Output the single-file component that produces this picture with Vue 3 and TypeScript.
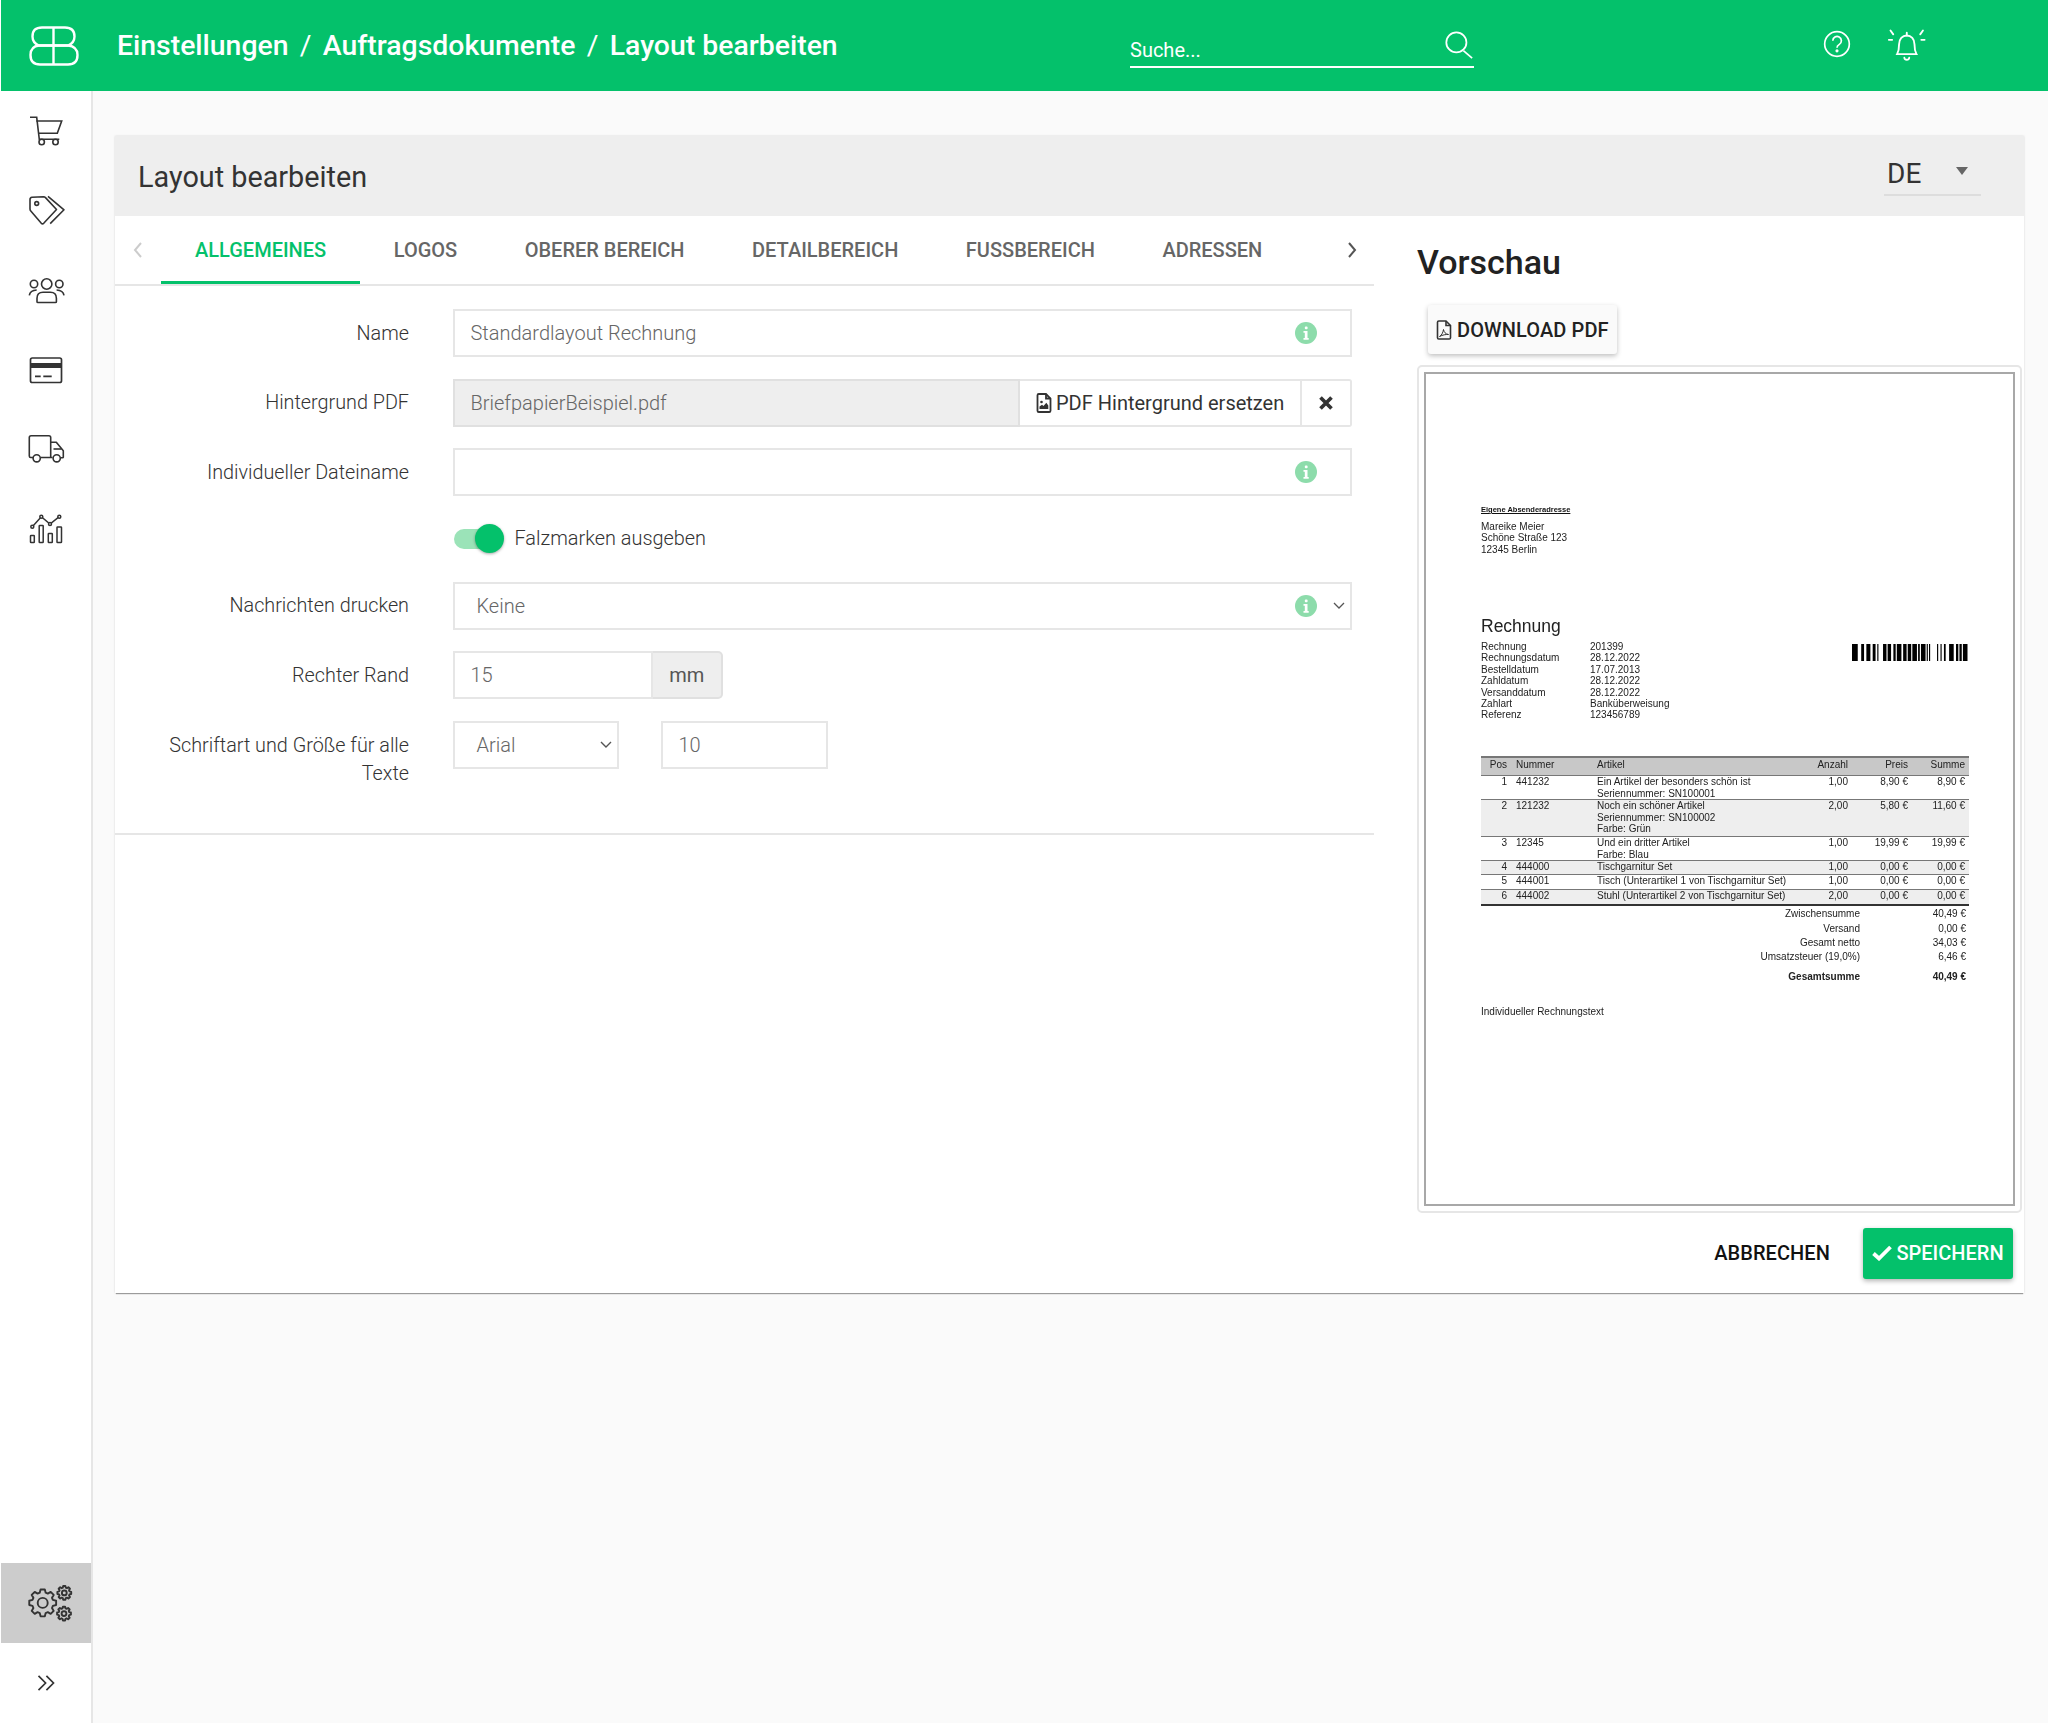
<script setup lang="ts">
function gear(cx: number, cy: number, ro: number, ri: number, n: number): string {
  const pts: string[] = []
  const step = (Math.PI * 2) / n
  for (let i = 0; i < n; i++) {
    const a = i * step
    const seq: [number, number][] = [
      [ri, a - step * 0.36],
      [ro, a - step * 0.2],
      [ro, a + step * 0.2],
      [ri, a + step * 0.36],
    ]
    for (const [r, t] of seq) {
      pts.push(`${(cx + r * Math.cos(t)).toFixed(2)} ${(cy + r * Math.sin(t)).toFixed(2)}`)
    }
  }
  return 'M' + pts.join('L') + 'Z'
}

const gears = [
  { d: gear(41.7, 39.9, 13.6, 10.6, 8), cx: 41.7, cy: 39.9, r: 5 },
  { d: gear(63.3, 29.9, 7, 5.4, 8), cx: 63.3, cy: 29.9, r: 2.4 },
  { d: gear(63, 50.6, 7, 5.4, 8), cx: 63, cy: 50.6, r: 2.4 },
]

const tabs = ['ALLGEMEINES', 'LOGOS', 'OBERER BEREICH', 'DETAILBEREICH', 'FUSSBEREICH', 'ADRESSEN']

const barData = [5,3,2.5,2,3.5,2,2.5,1.5,1,4,3,1,3,2,2,1,4,1.5,3,1,3,1,4,1,1.5,1,4,1,1,1,1,6,1,2,1,2,1.5,3,4,2,2,1,2,1,4,0]
const bars: { x: number; w: number }[] = []
let bx = 0
for (let i = 0; i < barData.length; i += 2) {
  bars.push({ x: bx, w: barData[i] })
  bx += barData[i] + barData[i + 1]
}
const barTotal = bx

const meta = [
  ['Rechnung', '201399'],
  ['Rechnungsdatum', '28.12.2022'],
  ['Bestelldatum', '17.07.2013'],
  ['Zahldatum', '28.12.2022'],
  ['Versanddatum', '28.12.2022'],
  ['Zahlart', 'Banküberweisung'],
  ['Referenz', '123456789'],
]

const rows = [
  { pos: '1', num: '441232', lines: ['Ein Artikel der besonders schön ist', 'Seriennummer: SN100001'], qty: '1,00', price: '8,90 €', sum: '8,90 €', h: 24, alt: false },
  { pos: '2', num: '121232', lines: ['Noch ein schöner Artikel', 'Seriennummer: SN100002', 'Farbe: Grün'], qty: '2,00', price: '5,80 €', sum: '11,60 €', h: 37, alt: true },
  { pos: '3', num: '12345', lines: ['Und ein dritter Artikel', 'Farbe: Blau'], qty: '1,00', price: '19,99 €', sum: '19,99 €', h: 24, alt: false },
  { pos: '4', num: '444000', lines: ['Tischgarnitur Set'], qty: '1,00', price: '0,00 €', sum: '0,00 €', h: 14, alt: true },
  { pos: '5', num: '444001', lines: ['Tisch (Unterartikel 1 von Tischgarnitur Set)'], qty: '1,00', price: '0,00 €', sum: '0,00 €', h: 15, alt: false },
  { pos: '6', num: '444002', lines: ['Stuhl (Unterartikel 2 von Tischgarnitur Set)'], qty: '2,00', price: '0,00 €', sum: '0,00 €', h: 15, alt: true },
]

const totals = [
  ['Zwischensumme', '40,49 €'],
  ['Versand', '0,00 €'],
  ['Gesamt netto', '34,03 €'],
  ['Umsatzsteuer  (19,0%)', '6,46 €'],
]
</script>

<template>
  <div class="app">
    <header class="topbar">
      <svg class="logo" viewBox="0 0 50 40" fill="none" stroke="#fff" stroke-width="2.4">
        <path d="M24.500 1.500H13Q3.500 1.500 3.500 10.500Q3.500 17 10 19.500H24.500ZM24.500 1.500H36Q45.500 1.500 45.500 10.500Q45.500 17 39 19.500H24.500Z" />
        <path d="M24.500 19.500H10Q1.500 20.500 1.500 29Q1.500 38.500 11 38.500H24.500ZM24.500 19.500H39Q48.500 20.500 48.500 29Q48.500 38.500 39 38.500H24.500Z" />
      </svg>
      <div class="crumbs">
        <span>Einstellungen</span><span class="sep">/</span><span>Auftragsdokumente</span><span class="sep">/</span><span>Layout bearbeiten</span>
      </div>
      <div class="search">
        <span>Suche...</span>
        <svg class="search-icon" viewBox="0 0 32 32" fill="none" stroke="#fff" stroke-width="2">
          <circle cx="13" cy="13" r="11.5" />
          <path d="M21 22.5L31 31" />
        </svg>
      </div>
      <svg class="help" viewBox="0 0 30 30" fill="none" stroke="#fff" stroke-width="1.8">
        <circle cx="15" cy="15" r="13.2" />
        <path d="M10.5 11.5a4.6 4.6 0 1 1 7 3.9c-1.7 1-2.5 1.9-2.5 3.6" />
        <circle cx="15" cy="22.3" r=".8" fill="#fff" />
      </svg>
      <svg class="bell" viewBox="0 0 40 40" fill="none" stroke="#fff" stroke-width="1.7" stroke-linecap="round">
        <path d="M11 26.500c1.600-3 1.800-5 1.800-9 0-4.600 3-8 7-8s7 3.400 7 8c0 4 .2 6 1.800 9z" />
        <path d="M19.800 7v2.500M17.600 29.800c.4 2.400 4 2.400 4.400 0" />
        <path d="M5 5l2.500 3.500M3.500 13.500h3M34.500 5L32 8.500M36 13.500h-3" />
      </svg>
    </header>

    <div class="shell">
      <aside class="sidebar">
        <div class="side-group">
          <div class="side-item">
            <svg viewBox="0 0 40 40" fill="none" stroke="#333" stroke-width="1.600">
              <path d="M4 6.300h6.700l2.600 22h20" />
              <path d="M10.300 10h25.400l-4.400 12.300H12" />
              <circle cx="15.700" cy="31" r="2.700" />
              <circle cx="29.500" cy="31" r="2.700" />
            </svg>
          </div>
          <div class="side-item">
            <svg viewBox="0 0 40 40" fill="none" stroke="#333" stroke-width="1.600" stroke-linejoin="round">
              <path d="M4 9.500q0-2 2-2.200l11.500-.5q1.200 0 2 .8l11 11.900-12.800 13.800q-1.200 1-2.400 0L4.800 21q-.8-.8-.8-2z" />
              <path d="M22 6.300L38 19.800 24.200 33.600" />
              <circle cx="10.700" cy="13.500" r="1.900" />
            </svg>
          </div>
          <div class="side-item">
            <svg viewBox="0 0 40 40" fill="none" stroke="#333" stroke-width="1.600">
              <circle cx="20.700" cy="14" r="5.200" />
              <circle cx="8" cy="14" r="3.700" />
              <circle cx="33.300" cy="14" r="3.700" />
              <path d="M11 31.700v-3.500q0-6 6-6h7.400q6 0 6 6v3.500q0 .8-1 .8H12q-1 0-1-.8z" />
              <path d="M3.300 25.300q.8-5 7.400-5.300M38 25.300q-.8-5-7.400-5.300" />
            </svg>
          </div>
          <div class="side-item">
            <svg viewBox="0 0 40 40" fill="none" stroke="#333" stroke-width="1.700">
              <rect x="4.500" y="8" width="31" height="24.500" rx="1.800" />
              <rect x="4.500" y="13" width="31" height="5" fill="#333" stroke="none" />
              <path d="M9 26.300h5.700M17.300 26.300h8.400" />
            </svg>
          </div>
          <div class="side-item">
            <svg viewBox="0 0 40 40" fill="none" stroke="#333" stroke-width="1.600" stroke-linejoin="round">
              <path d="M7 28.500H4.700q-1.400 0-1.400-1.400V8.500q0-1.800 1.800-1.800h17.800q1.800 0 1.800 1.800v19.700" />
              <path d="M14.500 28.500h12M24.700 13.300h5.600l7 8.400v6.500q0 .5-1 .5H34.500" />
              <path d="M27.500 20h8" />
              <circle cx="10.700" cy="29.300" r="3.600" />
              <circle cx="30.700" cy="29.300" r="3.600" />
            </svg>
          </div>
          <div class="side-item">
            <svg viewBox="0 0 40 40" fill="none" stroke="#333" stroke-width="1.500">
              <rect x="4.500" y="26.500" width="3.800" height="7" rx=".6" />
              <rect x="13.200" y="16.500" width="4" height="17" rx=".6" />
              <rect x="22.300" y="24.500" width="4" height="9" rx=".6" />
              <rect x="31" y="18" width="4.500" height="15.500" rx=".6" />
              <path d="M6.300 17.700l9-10L24 15l9.300-7.300" />
              <circle cx="6.300" cy="17.700" r="1.500" fill="#fff" />
              <circle cx="15.300" cy="7.700" r="1.500" fill="#fff" />
              <circle cx="24" cy="15" r="1.500" fill="#fff" />
              <circle cx="33.300" cy="7.700" r="1.500" fill="#fff" />
            </svg>
          </div>
        </div>
        <div class="side-group">
          <div class="side-active">
            <svg viewBox="0 0 90 79" fill="none" stroke="#333" stroke-width="1.900" stroke-linejoin="round">
              <g v-for="g in gears" :key="g.cx">
                <path :d="g.d" />
                <circle :cx="g.cx" :cy="g.cy" :r="g.r" />
              </g>
            </svg>
          </div>
          <div class="side-expand">
            <svg viewBox="0 0 24 24" fill="none" stroke="#333" stroke-width="2">
              <path d="M3 3.500l8.500 8.500L3 20.500M12.500 3.500L21 12l-8.500 8.500" />
            </svg>
          </div>
        </div>
      </aside>

      <main class="content">
        <section class="card">
          <div class="card-head">
            <h1>Layout bearbeiten</h1>
            <div class="lang">
              <span>DE</span>
              <i class="caret"></i>
            </div>
          </div>

          <div class="card-body">
            <div class="left">
              <div class="tabs">
                <div class="tab-nav">
                  <svg viewBox="0 0 12 20" fill="none" stroke="#ccc" stroke-width="2"><path d="M9 3L3 10l6 7" /></svg>
                </div>
                <div v-for="(t, i) in tabs" :key="t" class="tab" :class="{ active: i === 0 }">{{ t }}</div>
                <div class="tab-nav next">
                  <svg viewBox="0 0 12 20" fill="none" stroke="#555" stroke-width="2"><path d="M3 3l6 7-6 7" /></svg>
                </div>
              </div>

              <div class="form">
                <div class="row">
                  <label>Name</label>
                  <div class="field grow">
                    <span>Standardlayout Rechnung</span>
                    <svg class="info" viewBox="0 0 22 22"><circle cx="11" cy="11" r="11" fill="#8ddcab" /><rect x="9.800" y="4.500" width="2.800" height="2.800" rx="1" fill="#fff" /><path d="M8.500 9h4v7h1.200v1.800H8.500V16h1.300v-5.200H8.500z" fill="#fff" /></svg>
                  </div>
                </div>

                <div class="row">
                  <label>Hintergrund PDF</label>
                  <div class="file-group">
                    <div class="file-name">BriefpapierBeispiel.pdf</div>
                    <div class="file-btn">
                      <svg class="file-icon" viewBox="0 0 16 20" fill="none" stroke="#333" stroke-width="1.800">
                        <path d="M1.500 2.300q0-1.300 1.300-1.300H10l4.500 4.500v12.200q0 1.300-1.300 1.300H2.800q-1.300 0-1.300-1.300z" />
                        <path d="M10 1v4.500h4.500" />
                        <circle cx="5.500" cy="9" r="1.300" fill="#333" stroke="none" />
                        <path d="M3.500 16v-2.500l2.500-1.700 1.500 1.200 2.800-3.200 2 2.700V16z" fill="#333" stroke="none" />
                      </svg>
                      <span>PDF Hintergrund ersetzen</span>
                    </div>
                    <div class="file-x">
                      <svg viewBox="0 0 14 14" fill="none" stroke="#333" stroke-width="3.700"><path d="M1.500 1.500l11 11M12.500 1.500l-11 11" /></svg>
                    </div>
                  </div>
                </div>

                <div class="row">
                  <label>Individueller Dateiname</label>
                  <div class="field grow">
                    <span></span>
                    <svg class="info" viewBox="0 0 22 22"><circle cx="11" cy="11" r="11" fill="#8ddcab" /><rect x="9.800" y="4.500" width="2.800" height="2.800" rx="1" fill="#fff" /><path d="M8.500 9h4v7h1.200v1.800H8.500V16h1.300v-5.200H8.500z" fill="#fff" /></svg>
                  </div>
                </div>

                <div class="row toggle-row">
                  <label></label>
                  <div class="switch"><i class="track"></i><i class="thumb"></i></div>
                  <span class="toggle-label">Falzmarken ausgeben</span>
                </div>

                <div class="row">
                  <label>Nachrichten drucken</label>
                  <div class="field grow select-field">
                    <span>Keine</span>
                    <svg class="info" viewBox="0 0 22 22"><circle cx="11" cy="11" r="11" fill="#8ddcab" /><rect x="9.800" y="4.500" width="2.800" height="2.800" rx="1" fill="#fff" /><path d="M8.500 9h4v7h1.200v1.800H8.500V16h1.300v-5.200H8.500z" fill="#fff" /></svg>
                    <svg class="chev" viewBox="0 0 12 8" fill="none" stroke="#555" stroke-width="1.300"><path d="M1 1l5 5 5-5" /></svg>
                  </div>
                </div>

                <div class="row">
                  <label>Rechter Rand</label>
                  <div class="margin-group">
                    <div class="field margin-input"><span>15</span></div>
                    <div class="addon">mm</div>
                  </div>
                </div>

                <div class="row">
                  <label>Schriftart und Größe für alle Texte</label>
                  <div class="field font-select">
                    <span>Arial</span>
                    <svg class="chev" viewBox="0 0 12 8" fill="none" stroke="#555" stroke-width="1.400"><path d="M1 1l5 5 5-5" /></svg>
                  </div>
                  <div class="field font-size"><span>10</span></div>
                </div>
              </div>
            </div>

            <div class="right">
              <h2>Vorschau</h2>
              <div class="download">
                <svg class="file-icon" viewBox="0 0 16 20" fill="none" stroke="#333" stroke-width="1.600">
                  <path d="M1.500 2.300q0-1.300 1.300-1.300H10l4.500 4.500v12.200q0 1.300-1.300 1.300H2.800q-1.300 0-1.300-1.300z" />
                  <path d="M10 1v4.500h4.500" />
                  <path d="M3.500 16.500c2-1 3.500-3.800 4-7 .4 2.500 2 4.500 5 5-2.500-.2-6 .4-9 2z" stroke-width="1" />
                </svg>
                <span>DOWNLOAD PDF</span>
              </div>

              <div class="preview">
                <div class="frame">
                  <div class="doc">
                    <div class="sender-title">Eigene Absenderadresse</div>
                    <div class="sender">
                      <div>Mareike Meier</div>
                      <div>Schöne Straße 123</div>
                      <div>12345 Berlin</div>
                    </div>
                    <div class="doc-title">Rechnung</div>
                    <div class="doc-meta">
                      <div class="meta-grid">
                        <template v-for="m in meta" :key="m[0]">
                          <span>{{ m[0] }}</span><span>{{ m[1] }}</span>
                        </template>
                      </div>
                      <svg class="barcode" :viewBox="`0 0 ${barTotal} 17`" preserveAspectRatio="none">
                        <rect v-for="b in bars" :key="b.x" :x="b.x" y="0" :width="b.w" height="17" fill="#000" />
                      </svg>
                    </div>
                    <div class="t-row t-head">
                      <span class="r">Pos</span><span class="pl">Nummer</span><span>Artikel</span><span class="r">Anzahl</span><span class="r">Preis</span><span class="r">Summe</span>
                    </div>
                    <div v-for="r in rows" :key="r.pos" class="t-row" :class="{ alt: r.alt }" :style="{ height: r.h + 'px' }">
                      <span class="r">{{ r.pos }}</span>
                      <span class="pl">{{ r.num }}</span>
                      <span class="art"><span v-for="l in r.lines" :key="l" class="art-line">{{ l }}</span></span>
                      <span class="r">{{ r.qty }}</span>
                      <span class="r">{{ r.price }}</span>
                      <span class="r">{{ r.sum }}</span>
                    </div>
                    <div class="t-end"></div>
                    <div v-for="t in totals" :key="t[0]" class="total">
                      <span>{{ t[0] }}</span><span>{{ t[1] }}</span>
                    </div>
                    <div class="total grand"><span>Gesamtsumme</span><span>40,49 €</span></div>
                    <div class="doc-note">Individueller Rechnungstext</div>
                  </div>
                </div>
              </div>

              <div class="actions">
                <span class="cancel">ABBRECHEN</span>
                <div class="save">
                  <svg viewBox="0 0 20 16" fill="none" stroke="#fff" stroke-width="3.800"><path d="M1.500 8.500l5.500 5L18.500 2" /></svg>
                  <span>SPEICHERN</span>
                </div>
              </div>
            </div>
          </div>
        </section>
      </main>
    </div>
  </div>
</template>

<style>
html, body { margin: 0; background: #fafafa; }
</style>

<style scoped>
* { box-sizing: border-box; }
.app {
  width: 2048px;
  height: 1723px;
  display: flex;
  flex-direction: column;
  background: #fafafa;
  font-family: Roboto, "Liberation Sans", sans-serif;
  color: #333;
  overflow: hidden;
}
.topbar {
  height: 91px;
  flex: none;
  background: #04c16b;
  display: flex;
  align-items: center;
  padding-left: 28px;
  border-left: 1px solid #fff;
  color: #fff;
}
.logo { width: 50px; height: 40px; flex: none; margin-right: 38px; }
.crumbs {
  width: 1013px;
  flex: none;
  font-size: 28.400px;
  font-weight: 500;
  white-space: nowrap;
}
.sep { margin: 0 11.300px; font-weight: 400; }
.search {
  width: 344px;
  height: 38px;
  flex: none;
  margin-top: 7px;
  border-bottom: 2px solid #fff;
  font-size: 20px;
  font-weight: 400;
  display: flex;
  justify-content: space-between;
  align-items: flex-end;
  padding-bottom: 4px;
  position: relative;
}
.search-icon { width: 30px; height: 28px; position: absolute; right: 0; top: 1px; }
.help { width: 28px; height: 28px; flex: none; margin-left: 349px; margin-top: -3px; }
.bell { width: 44px; height: 44px; flex: none; margin-left: 33.700px; margin-top: 3px; }

.shell { flex: 1; display: flex; min-height: 0; }
.sidebar {
  width: 93px;
  flex: none;
  background: #fff;
  border-right: 2px solid #e6e6e6;
  display: flex;
  flex-direction: column;
  justify-content: space-between;
}
.side-item {
  height: 79.600px;
  display: flex;
  align-items: center;
  padding-left: 26px;
}
.side-item svg { width: 40px; height: 40px; }
.side-active { height: 79.600px; background: #ccc; margin-left: 1px; }
.side-active svg { display: block; width: 90px; height: 79px; }
.side-expand { height: 80px; display: flex; align-items: center; padding-left: 36px; }
.side-expand svg { width: 20px; height: 20px; }

.content { flex: 1; padding: 45px 24px 0 22px; min-width: 0; }
.card {
  height: 1157px;
  background: #fff;
  box-shadow: 0 2px 1px -1px rgba(0, 0, 0, 0.35), 0 0 2px rgba(0, 0, 0, 0.15);
  display: flex;
  flex-direction: column;
}
.card-head {
  height: 80px;
  flex: none;
  background: #eee;
  display: flex;
  align-items: center;
  justify-content: space-between;
  padding: 2px 43px 0 23px;
}
h1 { margin: 0; font-size: 28.800px; font-weight: 400; color: #333; }
.lang {
  width: 97px;
  height: 44px;
  align-self: flex-start;
  margin-top: 14px;
  padding: 0 13px 0 3px;
  border-bottom: 2px solid #ddd;
  display: flex;
  align-items: center;
  justify-content: space-between;
  font-size: 28px;
  color: #333;
}
.caret {
  width: 0;
  height: 0;
  border-left: 6.500px solid transparent;
  border-right: 6.500px solid transparent;
  border-top: 8px solid #666;
  margin-top: -4px;
}
.card-body { flex: 1; display: flex; min-height: 0; }
.left { width: 1259px; flex: none; }
.tabs {
  height: 70px;
  display: flex;
  align-items: stretch;
  border-bottom: 2px solid #e6e6e6;
}
.tab-nav {
  width: 46px;
  flex: none;
  display: flex;
  align-items: center;
  justify-content: center;
}
.tab-nav svg { width: 12px; height: 20px; }
.tab-nav.next { margin-left: auto; margin-right: -1px; }
.tab {
  padding: 2px 33.750px 0;
  font-size: 20px;
  font-weight: 500;
  color: #666;
  display: flex;
  align-items: center;
  white-space: nowrap;
  border-bottom: 3px solid transparent;
}
.tab.active { color: #04c16b; border-bottom-color: #04c16b; padding-left: 34px; }

.form {
  padding: 23px 22px 44px 0;
  border-bottom: 2px solid #e6e6e6;
  display: flex;
  flex-direction: column;
  gap: 21.700px;
}
.row { display: flex; align-items: flex-start; min-height: 48px; }
label {
  width: 294px;
  padding-left: 20px;
  flex: none;
  margin-right: 43.500px;
  text-align: right;
  font-size: 19.800px;
  font-weight: 300;
  line-height: 28.600px;
  padding-top: 10.700px;
  color: #333;
}
.field {
  height: 48px;
  border: 2px solid #e6e6e6;
  display: flex;
  align-items: center;
  padding-left: 16px;
  font-size: 20px;
  font-weight: 300;
  color: #666;
  position: relative;
  background: #fff;
}
.grow { flex: 1; }
.info { width: 22px; height: 22px; position: absolute; right: 33px; top: 11px; }
.select-field { padding-left: 22px; }
.chev { width: 12px; height: 8px; position: absolute; right: 5px; top: 18px; }
.file-group { flex: 1; display: flex; height: 48px; }
.file-name {
  width: 567px;
  background: #eee;
  border: 2px solid #e0e0e0;
  display: flex;
  align-items: center;
  padding-left: 16px;
  font-size: 20px;
  font-weight: 300;
  color: #666;
}
.file-btn {
  width: 282px;
  border: 2px solid #e6e6e6;
  border-left: 0;
  display: flex;
  align-items: center;
  padding-left: 16px;
  gap: 4.500px;
  font-size: 20px;
  color: #333;
  white-space: nowrap;
}
.file-icon { width: 16px; height: 20px; flex: none; }
.file-x {
  flex: 1;
  border: 2px solid #e6e6e6;
  border-left: 0;
  border-radius: 0 3px 3px 0;
  display: flex;
  align-items: center;
  justify-content: center;
}
.file-x svg { width: 14px; height: 14px; }
.toggle-row { min-height: 41.800px; align-items: center; }
.toggle-row label { padding-top: 0; }
.switch { width: 51px; height: 30px; position: relative; flex: none; margin-right: 11px; }
.track {
  position: absolute;
  left: 1px;
  top: 5px;
  width: 41px;
  height: 20px;
  border-radius: 10px;
  background: #9be3b8;
}
.thumb {
  position: absolute;
  left: 22px;
  top: 0;
  width: 29px;
  height: 29px;
  border-radius: 50%;
  background: #04c16b;
  box-shadow: 0 1px 3px rgba(0, 0, 0, 0.35);
}
.toggle-label { font-size: 19.900px; font-weight: 300; color: #333; }
.margin-group { display: flex; height: 48px; }
.margin-input { width: 200px; }
.addon {
  width: 70.500px;
  background: #eee;
  border: 2px solid #e0e0e0;
  border-left: 0;
  border-radius: 0 5px 5px 0;
  display: flex;
  align-items: center;
  justify-content: center;
  font-size: 20px;
  color: #555;
}
.font-select { width: 166px; padding-left: 22px; margin-right: 42px; }
.font-size { width: 167px; }

.right {
  flex: 1;
  min-width: 0;
  padding: 28px 2px 0 43px;
  display: flex;
  flex-direction: column;
}
h2 {
  margin: 0;
  height: 36px;
  line-height: 36px;
  font-size: 34px;
  font-weight: 500;
  color: #222;
}
.download {
  margin: 25px 0 0 11px;
  width: 189px;
  height: 49px;
  background: #fafafa;
  border-radius: 3px;
  box-shadow: 0 2px 5px rgba(0, 0, 0, 0.25);
  display: flex;
  align-items: center;
  padding-left: 8px;
  gap: 5px;
  font-size: 20px;
  font-weight: 500;
  letter-spacing: 0.100px;
  color: #222;
  white-space: nowrap;
}
.preview {
  margin-top: 11px;
  height: 848px;
  border: 2px solid #e6e6e6;
  border-radius: 5px;
  padding: 5px;
  flex: none;
}
.frame {
  height: 100%;
  border: 2px solid #a8a8a8;
  background: #fff;
  overflow: hidden;
}
.doc {
  padding: 130px 44px 0 55px;
  font-family: "Liberation Sans", Arial, sans-serif;
  font-size: 10px;
  line-height: 11.400px;
  color: #222;
  filter: blur(0.400px);
  white-space: nowrap;
}
.sender-title { font-size: 7.500px; font-weight: 700; text-decoration: underline; color: #111; }
.sender { margin-top: 5.600px; }
.doc-title { margin-top: 59.500px; font-size: 17.500px; line-height: 22px; color: #222; }
.doc-meta { margin-top: 4.300px; display: flex; justify-content: space-between; align-items: flex-start; height: 79.700px; padding-right: 1.500px; }
.meta-grid { display: grid; grid-template-columns: 109px auto; }
.barcode { width: 115.500px; height: 17px; margin-top: 3px; }
.t-row {
  display: grid;
  grid-template-columns: 26px 90px 172px 79px 60px 57px;
  padding-right: 4px;
  border-top: 1.500px solid #777;
}
.t-head { margin-top: 35.500px; height: 19px; background: #c8c8c8; border-top: 2px solid #777; padding-top: 1px; }
.t-row.alt { background: #eee; }
.r { text-align: right; }
.pl { padding-left: 9px; }
.art { display: block; }
.art-line { display: block; }
.t-end { border-top: 2px solid #333; margin-bottom: 1px; }
.total {
  display: grid;
  grid-template-columns: 379px 106px;
  height: 14.400px;
  line-height: 14.400px;
  text-align: right;
}
.grand { margin-top: 5.600px; font-weight: 700; color: #222; }
.doc-note { margin-top: 21px; }

.actions {
  margin-top: 14.500px;
  padding-right: 9px;
  display: flex;
  align-items: center;
  justify-content: flex-end;
}
.cancel { font-size: 20px; font-weight: 500; color: #111; margin-right: 33px; letter-spacing: 0.080px; }
.save {
  width: 150px;
  height: 51px;
  background: #04c16b;
  border-radius: 3px;
  box-shadow: 0 2px 5px rgba(0, 0, 0, 0.3);
  color: #fff;
  display: flex;
  align-items: center;
  justify-content: center;
  gap: 4px;
  font-size: 20px;
  font-weight: 500;
}
.save svg { width: 20px; height: 16px; }
</style>
